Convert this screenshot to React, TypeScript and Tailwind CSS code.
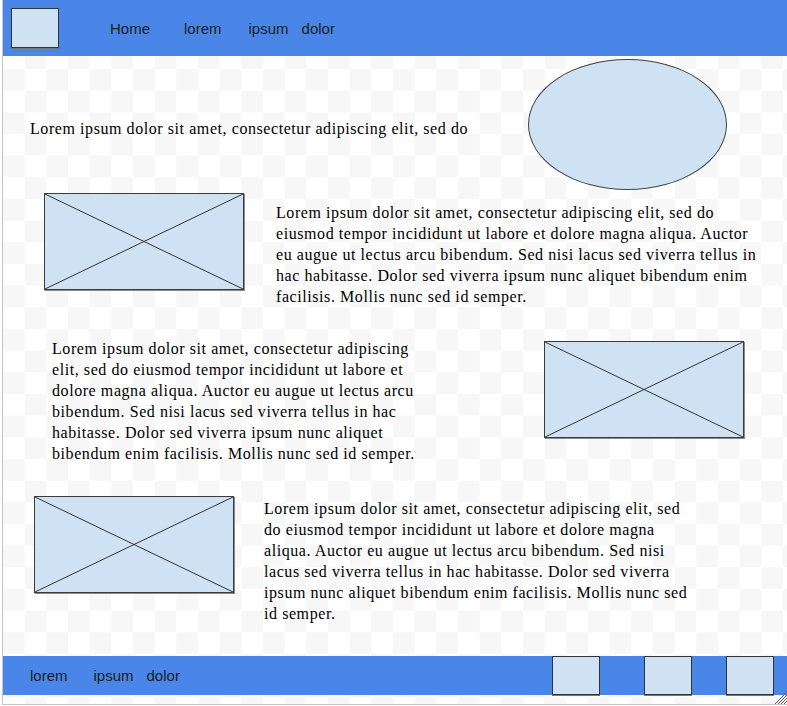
const Placeholder = ({ className = "" }: { className?: string }) => (
  <div className={`relative w-[200px] h-[97px] shrink-0 bg-[#cfe2f3] border border-[#3c3c3c] shadow-[1px_1px_0_#8a8a8a] ${className}`}>
    <svg className="absolute inset-0 w-full h-full" viewBox="0 0 198 95" preserveAspectRatio="none">
      <line x1="0" y1="0" x2="198" y2="95" stroke="#333" strokeWidth="1" vectorEffect="non-scaling-stroke" />
      <line x1="198" y1="0" x2="0" y2="95" stroke="#333" strokeWidth="1" vectorEffect="non-scaling-stroke" />
    </svg>
  </div>
);

const Square = ({ className = "" }: { className?: string }) => (
  <div className={`bg-[#cfe2f3] border border-[#333] shadow-[0_1px_0_#777] ${className}`} />
);

const lorem =
  "Lorem ipsum dolor sit amet, consectetur adipiscing elit, sed do eiusmod tempor incididunt ut labore et dolore magna aliqua. Auctor eu augue ut lectus arcu bibendum. Sed nisi lacus sed viverra tellus in hac habitasse. Dolor sed viverra ipsum nunc aliquet bibendum enim facilisis. Mollis nunc sed id semper.";

const App = () => {
  return (
    <div className="w-[787px] h-[706px] overflow-hidden bg-white">
      <div
        className="relative ml-[2px] w-[790px] h-[705px] flex flex-col border-l border-b border-[#c6c6c6] bg-[conic-gradient(#f7f7f7_25%,#ffffff_0_50%,#f7f7f7_0_75%,#ffffff_0)] bg-[length:43.33px_43.33px] bg-[position:0_4px] text-black"
        style={{ fontFamily: '"Liberation Serif", "Times New Roman", serif' }}
      >
        {/* header */}
        <header className="h-[56px] shrink-0 w-[784px] bg-[#4a86e8] flex items-center font-['Liberation_Sans',Arial,sans-serif] text-[15px] text-[#1e1e1e]">
          <Square className="ml-[8px] w-[48px] h-[40px]" />
          <nav className="flex items-center ml-[51px] pt-[3px]">
            <span>Home</span>
            <span className="ml-[34px]">lorem</span>
            <span className="ml-[27px]">ipsum</span>
            <span className="ml-[13px]">dolor</span>
          </nav>
        </header>

        {/* main */}
        <main className="h-[600px] shrink-0 w-[784px] flex flex-col text-[16px] leading-[21px] tracking-[0.57px]">
          <div className="flex items-start pt-[3px]">
            <p className="ml-[27px] mt-[59px] whitespace-nowrap">
              Lorem ipsum dolor sit amet, consectetur adipiscing elit, sed do
            </p>
            <div className="ml-auto mr-[60px] w-[199px] h-[131px] rounded-[50%] bg-[#cfe2f3] border border-[#444]" />
          </div>

          <div className="flex items-start mt-[3px]">
            <Placeholder className="ml-[41px]" />
            <p className="ml-[32px] mt-[9px] w-[488px]">{lorem}</p>
          </div>

          <div className="flex items-start mt-[31px]">
            <p className="ml-[49px] w-[376px]">{lorem}</p>
            <Placeholder className="ml-auto mr-[43px] mt-[3px]" />
          </div>

          <div className="flex items-start mt-[32px]">
            <Placeholder className="ml-[31px]" />
            <p className="ml-[30px] mt-[2px] w-[434px]">{lorem}</p>
          </div>
        </main>

        {/* footer */}
        <footer className="h-[39px] shrink-0 w-[784px] bg-[#4a86e8] flex items-stretch font-['Liberation_Sans',Arial,sans-serif] text-[15px] text-[#1e1e1e]">
          <div className="flex items-center ml-[27px] pt-[1px]">
            <span>lorem</span>
            <span className="ml-[26px]">ipsum</span>
            <span className="ml-[13px]">dolor</span>
          </div>
          <div className="ml-auto mr-[13px] flex">
            <Square className="w-[48px] h-[39px]" />
            <Square className="ml-[44px] w-[48px] h-[39px]" />
            <Square className="ml-[34px] w-[48px] h-[39px]" />
          </div>
        </footer>

        {/* resize grip */}
        <svg className="absolute left-[770px] bottom-0 w-[14px] h-[14px]" viewBox="0 0 14 14">
          <line x1="2" y1="14" x2="14" y2="2" stroke="#555" strokeWidth="1" />
          <line x1="5" y1="14" x2="14" y2="5" stroke="#555" strokeWidth="1" />
          <line x1="8" y1="14" x2="14" y2="8" stroke="#555" strokeWidth="1" />
          <line x1="11" y1="14" x2="14" y2="11" stroke="#555" strokeWidth="1" />
        </svg>
      </div>
    </div>
  );
};

export default App;
